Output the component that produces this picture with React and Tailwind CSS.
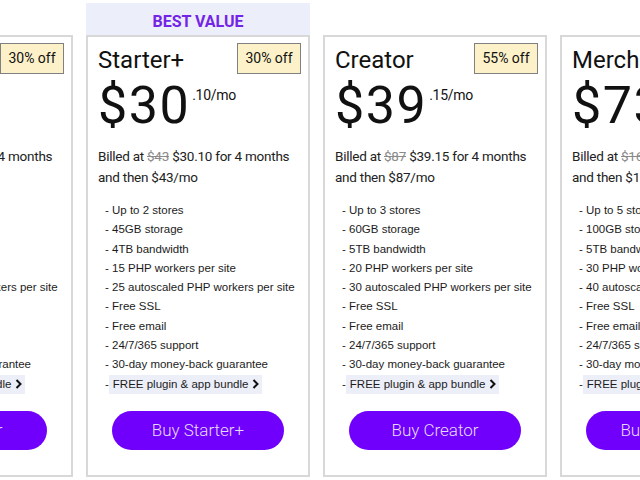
import React from 'react';

const plans = [
    {
        name: 'Starter',
        off: '30% off',
        dollars: '$17',
        cents: '.50/mo',
        was: '$25',
        now: '$17.50',
        then: '$25/mo',
        features: [
            'Up to 1 store',
            '30GB storage',
            '3TB bandwidth',
            '10 PHP workers per site',
            '20 autoscaled PHP workers per site',
            'Free SSL',
            'Free email',
            '24/7/365 support',
            '30-day money-back guarantee',
        ],
    },
    {
        name: 'Starter+',
        best: true,
        off: '30% off',
        dollars: '$30',
        cents: '.10/mo',
        was: '$43',
        now: '$30.10',
        then: '$43/mo',
        features: [
            'Up to 2 stores',
            '45GB storage',
            '4TB bandwidth',
            '15 PHP workers per site',
            '25 autoscaled PHP workers per site',
            'Free SSL',
            'Free email',
            '24/7/365 support',
            '30-day money-back guarantee',
        ],
    },
    {
        name: 'Creator',
        off: '55% off',
        dollars: '$39',
        cents: '.15/mo',
        was: '$87',
        now: '$39.15',
        then: '$87/mo',
        features: [
            'Up to 3 stores',
            '60GB storage',
            '5TB bandwidth',
            '20 PHP workers per site',
            '30 autoscaled PHP workers per site',
            'Free SSL',
            'Free email',
            '24/7/365 support',
            '30-day money-back guarantee',
        ],
    },
    {
        name: 'Merchant',
        off: '55% off',
        dollars: '$73',
        cents: '.35/mo',
        was: '$163',
        now: '$73.35',
        then: '$163/mo',
        features: [
            'Up to 5 stores',
            '100GB storage',
            '5TB bandwidth',
            '30 PHP workers per site',
            '40 autoscaled PHP workers per site',
            'Free SSL',
            'Free email',
            '24/7/365 support',
            '30-day money-back guarantee',
        ],
    },
];

function Chevron() {
    return (
        <svg width="7" height="10" viewBox="0 0 7 10" className="inline-block ml-[4px] align-[-1px]">
            <path d="M1.5 1 L5.5 5 L1.5 9" fill="none" stroke="#111" strokeWidth="2"/>
        </svg>
    );
}

function PlanCard({plan}) {
    return (
        <div className="w-[224px] shrink-0 flex flex-col">
            {plan.best ? (
                <div className="h-[32px] pt-[5px] bg-[#eceefa] flex items-center justify-center text-[16px] font-bold text-[#7424e6] font-['Roboto',sans-serif]">
                    BEST VALUE
                </div>
            ) : (
                <div className="h-[32px]"></div>
            )}
            <div className="h-[442px] border-2 border-[#d8d8d8] bg-white px-[10px] pt-[6px] flex flex-col font-['Roboto',sans-serif] text-[#111]">
                <div className="flex justify-between items-start">
                    <div className="text-[24px] leading-[28px] mt-[3px]">{plan.name}</div>
                    <div className="h-[31px] w-[64px] mr-[-3px] border border-[#808080] bg-[#fdf1c9] text-[14px] flex items-center justify-center">
                        {plan.off}
                    </div>
                </div>
                <div className="flex items-start mt-[6px]">
                    <span className="text-[52px] leading-[52px] tracking-[1.5px]">{plan.dollars}</span>
                    <span className="text-[14px] leading-[16px] mt-[7px] ml-[2px] tracking-[-0.3px]">{plan.cents}</span>
                </div>
                <div className="mt-[14px] text-[13.5px] leading-[21px] tracking-[-0.25px] text-[#222] whitespace-nowrap">
                    Billed at <span className="line-through text-[#8a8a8a]">{plan.was}</span> {plan.now} for 4 months<br/>and then {plan.then}
                </div>
                <ul className="mt-[13px] pl-[7px] text-[11.5px] leading-[19.3px] text-[#1c1c1c] font-['Liberation_Sans',Arial,sans-serif]">
                    {plan.features.map((f) => (
                        <li key={f} className="whitespace-nowrap">- {f}</li>
                    ))}
                    <li className="whitespace-nowrap">
                        -<span className="bg-[#eceef8] pl-[4px] pr-[3px] inline-block">FREE plugin &amp; app bundle<Chevron/></span>
                    </li>
                </ul>
                <button className="mt-[17px] mx-auto w-[172px] h-[39px] rounded-full bg-[#7000fc] text-[#e6dbff] text-[17px] font-light font-['Roboto',sans-serif]">
                    Buy {plan.name}
                </button>
            </div>
        </div>
    );
}

export default function App() {
    return (
        <div className="w-[640px] h-[480px] overflow-hidden bg-white">
            <div className="flex gap-[13px] ml-[-151px] pt-[3px]">
                {plans.map((plan) => (
                    <PlanCard key={plan.name} plan={plan}/>
                ))}
            </div>
        </div>
    );
}
